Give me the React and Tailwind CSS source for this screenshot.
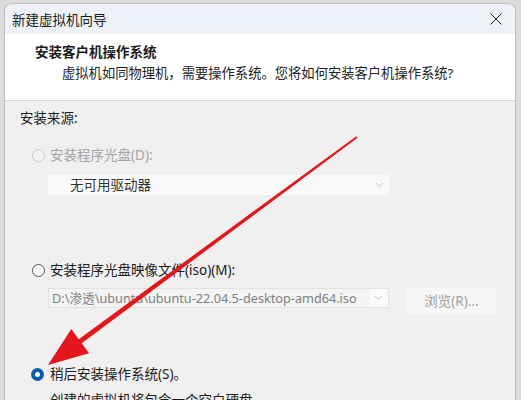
import React from 'react';

function Radio({ state }) {
  if (state === 'checked') {
    return (
      <span className="w-[13px] h-[13px] rounded-full bg-[#0b5cad] flex items-center justify-center shrink-0">
        <span className="w-[5px] h-[5px] rounded-full bg-white" />
      </span>
    );
  }
  if (state === 'disabled') {
    return <span className="w-[13px] h-[13px] rounded-full border border-[#c9c9c9] bg-[#f3f3f3] shrink-0" />;
  }
  return <span className="w-[13px] h-[13px] rounded-full border border-[#555] bg-[#f7f7f7] shrink-0" />;
}

function Chevron({ color }) {
  return (
    <svg width="9" height="6" viewBox="0 0 9 6" fill="none">
      <path d="M1 1l3.5 3.5L8 1" stroke={color} strokeWidth="1" />
    </svg>
  );
}

export default function App() {
  return (
    <div className="relative w-[521px] h-[400px] overflow-hidden bg-[#dcdcdc] pt-[3px] pl-[4px] font-['Noto_Sans','Noto_Sans_CJK_SC',sans-serif] text-[#1b1b1b]">
      <div className="w-[512px] h-[397px] rounded-t-[8px] border border-b-0 border-[#bdbdbd] bg-[#f0f0f0] overflow-hidden">
        {/* title bar */}
        <div className="h-[30px] bg-[#eef2f8] flex items-center justify-between pl-[7px] pr-[13px]">
          <span className="text-[13.5px] leading-[20px] mt-[1px]">新建虚拟机向导</span>
          <svg width="12" height="12" viewBox="0 0 12 12" fill="none">
            <path d="M0.5 0.5l11 11M11.5 0.5l-11 11" stroke="#222" strokeWidth="1" />
          </svg>
        </div>

        {/* header */}
        <div className="h-[67px] bg-white border-b border-[#d6d6d6] pt-[8px]">
          <div className="pl-[30px] text-[13.5px] leading-[20px] font-bold">安装客户机操作系统</div>
          <div className="pl-[57px] mt-[1px] text-[13.3px] leading-[20px] text-[#222]">
            虚拟机如同物理机，需要操作系统。您将如何安装客户机操作系统?
          </div>
        </div>

        {/* body */}
        <div className="pt-[7px] text-[13.5px] leading-[20px]">
          <div className="pl-[15px]">安装来源:</div>

          <div className="mt-[17px] pl-[27px] flex items-center gap-[5px] text-[#a3a3a3]">
            <Radio state="disabled" />
            <span>安装程序光盘(D):</span>
          </div>
          <div className="mt-[10px] ml-[43px] w-[341px] h-[20px] bg-[#f9f9f9] flex items-center justify-between pl-[22px] pr-[5px]">
            <span className="text-[#333]">无可用驱动器</span>
            <Chevron color="#c4c4c4" />
          </div>

          <div className="mt-[65px] pl-[27px] flex items-center gap-[5px]">
            <Radio state="on" />
            <span>安装程序光盘映像文件(iso)(M):</span>
          </div>
          <div className="mt-[8px] flex items-start">
            <div className="ml-[43px] w-[341px] h-[20px] bg-[#f4f4f4] border border-[#e2e2e2] flex items-center">
              <span className="flex-1 pl-[3px] text-[12.7px] text-[#808080] whitespace-nowrap overflow-hidden">
                D:\渗透\ubuntu\ubuntu-22.04.5-desktop-amd64.iso
              </span>
              <span className="w-[19px] h-full bg-[#fbfbfb] flex items-center justify-center">
                <Chevron color="#c4c4c4" />
              </span>
            </div>
            <div className="ml-[18px] w-[89px] h-[25px] bg-[#f7f7f7] flex items-center justify-center text-[#a0a0a0] text-[13.5px]">
              浏览(R)...
            </div>
          </div>

          <div className="mt-[51px] pl-[26px] flex items-center gap-[6px]">
            <Radio state="checked" />
            <span>稍后安装操作系统(S)。</span>
          </div>
          <div className="mt-[6px] pl-[45px]">创建的虚拟机将包含一个空白硬盘。</div>
        </div>
      </div>

      {/* red annotation arrow */}
      <svg className="absolute inset-0 pointer-events-none" width="521" height="400" viewBox="0 0 521 400">
        <polygon
          points="48,365 89.1,353.3 81.7,343.2 357.6,137.8 356.4,136.2 78.7,339.2 71.3,329.1"
          fill="#e3161c"
        />
      </svg>
    </div>
  );
}
